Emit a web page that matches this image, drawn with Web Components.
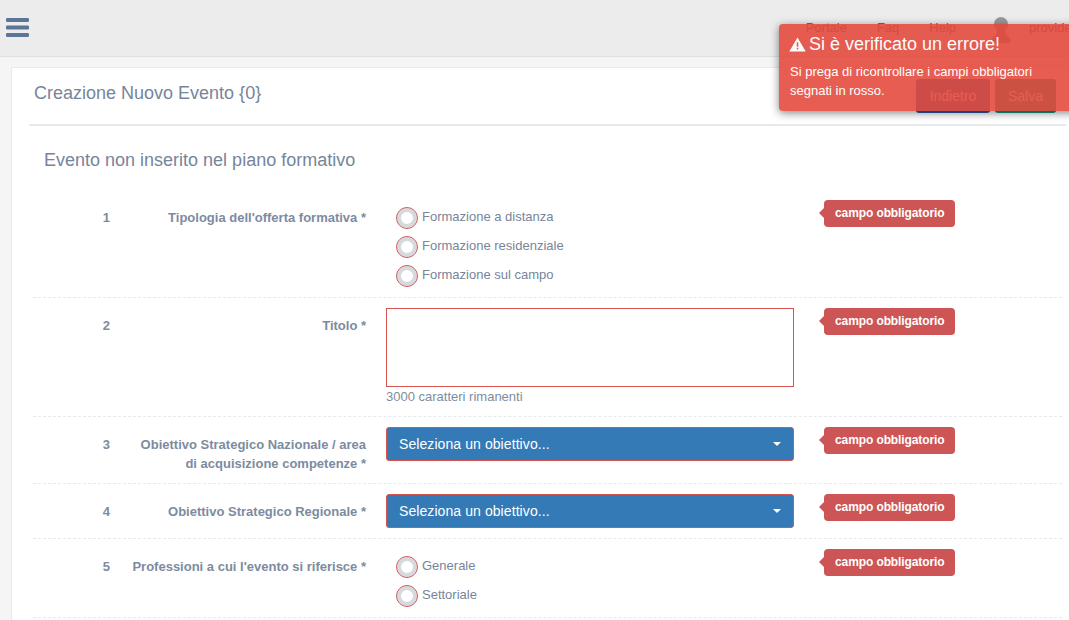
<!DOCTYPE html>
<html lang="it">
<head>
<meta charset="utf-8">
<title>Creazione Nuovo Evento</title>
<style>
  html, body { margin: 0; height: 620px; overflow: hidden; background: #f5f5f5; }
  body { font-family: "Liberation Sans", Arial, sans-serif; color: #76859a; position: relative; }
</style>
</head>
<body>
<top-bar></top-bar>
<error-toast title-text="Si è verificato un errore!">Si prega di ricontrollare i campi obbligatori segnati in rosso.</error-toast>
<event-card heading="Creazione Nuovo Evento {0}">
  <section-title>Evento non inserito nel piano formativo</section-title>

  <form-row num="1" label="Tipologia dell'offerta formativa *">
    <radio-option>Formazione a distanza</radio-option>
    <radio-option>Formazione residenziale</radio-option>
    <radio-option>Formazione sul campo</radio-option>
  </form-row>
  <form-row num="2" label="Titolo *">
    <text-box hint="3000 caratteri rimanenti"></text-box>
  </form-row>
  <form-row num="3" label="Obiettivo Strategico Nazionale / area di acquisizione competenze *">
    <select-box>Seleziona un obiettivo...</select-box>
  </form-row>
  <form-row num="4" label="Obiettivo Strategico Regionale *">
    <select-box>Seleziona un obiettivo...</select-box>
  </form-row>
  <form-row num="5" label="Professioni a cui l'evento si riferisce *">
    <radio-option>Generale</radio-option>
    <radio-option>Settoriale</radio-option>
  </form-row>
</event-card>

<script>
class TopBar extends HTMLElement {
  connectedCallback() {
    this.attachShadow({ mode: 'open' });
    this.shadowRoot.innerHTML = `
      <style>
        :host {
          display: flex;
          align-items: center;
          height: 56px;
          background: #ececec;
          border-bottom: 1px solid #dcdfe6;
          padding-left: 6px;
          font-size: 13px;
          color: #676a6c;
        }
        svg.bars { display: block; margin-top: -1px; }
        nav {
          margin-left: auto;
          display: flex;
          align-items: center;
          height: 100%;
          white-space: nowrap;
          margin-right: -7px;
        }
        nav a { display: block; margin-top: -2px; }
        .portale { margin-right: 30px; }
        .faq { margin-right: 30px; }
        .help { margin-right: 36px; }
        .user { display: block; margin-right: 19px; margin-top: 4px; }
      </style>
      <svg class="bars" width="23" height="19" viewBox="0 0 23 19">
        <rect x="0" y="0" width="23" height="4" rx="1.2" fill="#5b7596"/>
        <rect x="0" y="7.5" width="23" height="4" rx="1.2" fill="#5b7596"/>
        <rect x="0" y="15" width="23" height="4" rx="1.2" fill="#5b7596"/>
      </svg>
      <nav>
        <a class="portale">Portale</a>
        <a class="faq">Faq</a>
        <a class="help">Help</a>
        <svg class="user" width="18" height="26" viewBox="0 0 18 26">
          <circle cx="9" cy="7" r="7" fill="#9a9a9a"/>
          <path d="M5 12h8l1 6 4 3v5H0v-5l4-3z" fill="#9a9a9a"/>
        </svg>
        <a>provider</a>
      </nav>
    `;
  }
}
customElements.define('top-bar', TopBar);

class ErrorToast extends HTMLElement {
  connectedCallback() {
    this.attachShadow({ mode: 'open' });
    this.shadowRoot.innerHTML = `
      <style>
        :host {
          display: block;
          position: absolute;
          z-index: 10;
          left: 779px;
          top: 24px;
          width: 300px;
          height: 87px;
          box-sizing: border-box;
          padding: 8px 10px 0 10px;
          background: #e54638;
          opacity: .87;
          border-radius: 4px 0 0 4px;
          box-shadow: 0 2px 8px rgba(0,0,0,.55);
          color: #fff;
        }
        .title {
          display: flex;
          align-items: center;
          gap: 3px;
          font-size: 18px;
          line-height: 24px;
          white-space: nowrap;
        }
        svg { display: block; }
        .body {
          margin: 6px 0 0 1px;
          width: 262px;
          font-size: 13px;
          line-height: 19px;
        }
      </style>
      <div class="title">
        <svg width="17" height="15" viewBox="0 0 17 15">
          <path fill-rule="evenodd" d="M8.5 0.5 16.7 14.5H0.3zM7.7 5.2v4.6h1.6V5.2zM7.7 10.8v1.6h1.6V10.8z" fill="#fff"/>
        </svg>
        <span>${this.getAttribute('title-text')}</span>
      </div>
      <div class="body"><slot></slot></div>
    `;
  }
}
customElements.define('error-toast', ErrorToast);

class EventCard extends HTMLElement {
  connectedCallback() {
    this.attachShadow({ mode: 'open' });
    this.shadowRoot.innerHTML = `
      <style>
        :host {
          display: block;
          margin: 10px 0 0 11px;
          background: #fff;
          border: 1px solid #e7eaec;
          border-width: 1px 0 0 1px;
          padding: 0 3px 0 17px;
          height: 553px;
          box-sizing: border-box;
        }
        header {
          display: flex;
          align-items: flex-start;
          justify-content: space-between;
          height: 58px;
          box-sizing: border-box;
          border-bottom: 2px solid #e7eaec;
          padding: 11px 10px 0 5px;
        }
        h1 {
          margin: 0;
          font-size: 18px;
          font-weight: 400;
          line-height: 28px;
          color: #76859a;
        }
        .buttons { display: flex; gap: 5px; }
        button {
          height: 34px;
          border: 0;
          border-bottom: 2px solid;
          border-radius: 3px;
          color: #fff;
          font: 14px "Liberation Sans", Arial, sans-serif;
          padding: 2px 0 0;
        }
        .back { width: 74px; background: #337ab7; border-color: #2a5fa8; }
        .save { width: 61px; background: #23a08a; border-color: #129a80; }
      </style>
      <header>
        <h1>${this.getAttribute('heading')}</h1>
        <div class="buttons">
          <button class="back">Indietro</button>
          <button class="save">Salva</button>
        </div>
      </header>
      <slot></slot>
    `;
  }
}
customElements.define('event-card', EventCard);

class SectionTitle extends HTMLElement {
  connectedCallback() {
    this.attachShadow({ mode: 'open' });
    this.shadowRoot.innerHTML = `
      <style>
        :host {
          display: block;
          padding: 22px 0 0 15px;
          height: 42px;
          font-size: 18px;
          line-height: 24px;
          color: #76859a;
        }
      </style>
      <slot></slot>
    `;
  }
}
customElements.define('section-title', SectionTitle);

class FormRow extends HTMLElement {
  connectedCallback() {
    this.attachShadow({ mode: 'open' });
    this.shadowRoot.innerHTML = `
      <style>
        :host {
          display: grid;
          grid-template-columns: 77px 256px 428px 161px;
          margin: 0 4px;
          padding: 10px 0;
          border-bottom: 1px dashed #e7eaec;
          font-size: 13px;
        }
        .num, .label { font-weight: 700; line-height: 19px; color: #7d8ba0; padding-top: 8px; }
        .num { text-align: right; }
        .label { text-align: right; padding-left: 20px; }
        .control { margin-left: 20px; width: 408px; }
        .tag {
          position: relative;
          justify-self: start;
          margin-left: 30px;
          width: 131px;
          height: 27px;
          box-sizing: border-box;
          padding-left: 11px;
          background: #cd5555;
          border-radius: 4px;
          color: #fff;
          font-size: 12px;
          font-weight: 700;
          letter-spacing: -.1px;
          line-height: 27px;
          white-space: nowrap;
        }
        .tag::before {
          content: "";
          position: absolute;
          left: -5px;
          top: 8px;
          border-style: solid;
          border-width: 5px 5px 5px 0;
          border-color: transparent #cd5555 transparent transparent;
        }
      </style>
      <div class="num">${this.getAttribute('num')}</div>
      <div class="label">${this.getAttribute('label')}</div>
      <div class="control"><slot></slot></div>
      <div class="tag">campo obbligatorio</div>
    `;
  }
}
customElements.define('form-row', FormRow);

class RadioOption extends HTMLElement {
  connectedCallback() {
    this.attachShadow({ mode: 'open' });
    this.shadowRoot.innerHTML = `
      <style>
        :host {
          display: flex;
          align-items: flex-start;
          height: 29px;
          margin-left: 10px;
          font-size: 13px;
          color: #76859a;
        }
        .dot {
          width: 22px;
          height: 22px;
          box-sizing: border-box;
          border: 1px solid #c95a5d;
          border-radius: 50%;
          background: #fff;
          box-shadow: inset 0 0 0 4px #d6dadd;
          margin-top: 7px;
          margin-right: 4px;
        }
        span { line-height: 16px; margin-top: 9px; }
      </style>
      <div class="dot"></div>
      <span><slot></slot></span>
    `;
  }
}
customElements.define('radio-option', RadioOption);

class TextBox extends HTMLElement {
  connectedCallback() {
    this.attachShadow({ mode: 'open' });
    this.shadowRoot.innerHTML = `
      <style>
        :host { display: block; font-size: 13px; color: #7f8c9e; }
        .box {
          height: 79px;
          box-sizing: border-box;
          border: 1px solid #d9534f;
          background: #fff;
        }
        .hint { line-height: 18px; margin-top: 1px; }
      </style>
      <div class="box"></div>
      <div class="hint">${this.getAttribute('hint')}</div>
    `;
  }
}
customElements.define('text-box', TextBox);

class SelectBox extends HTMLElement {
  connectedCallback() {
    this.attachShadow({ mode: 'open' });
    this.shadowRoot.innerHTML = `
      <style>
        :host {
          display: flex;
          align-items: center;
          justify-content: space-between;
          height: 34px;
          box-sizing: border-box;
          padding: 0 12px;
          background: #337ab7;
          border: 1px solid #d9534f;
          border-radius: 3px;
          color: #fff;
          font-size: 14px;
          letter-spacing: .08px;
        }
        i { width: 0; height: 0; border: 4px solid transparent; border-top-color: #fff; border-bottom: 0; }
      </style>
      <span><slot></slot></span>
      <i></i>
    `;
  }
}
customElements.define('select-box', SelectBox);
</script>
</body>
</html>
